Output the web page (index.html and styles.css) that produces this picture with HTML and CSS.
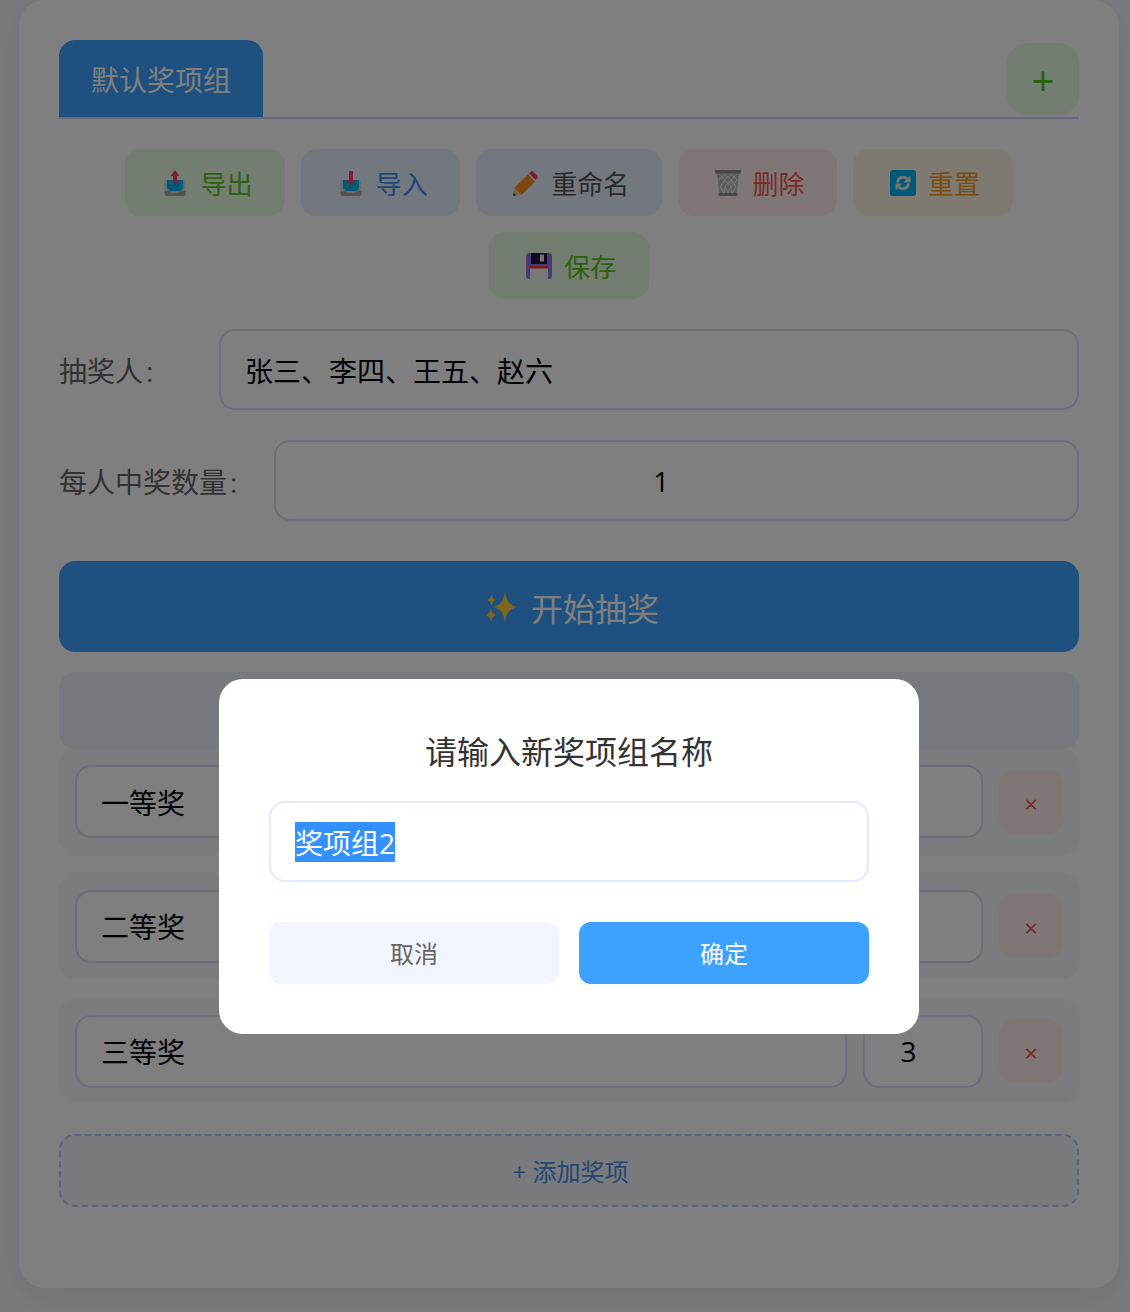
FILE: index.html
```html
<!DOCTYPE html>
<html lang="zh-CN">
<head>
<meta charset="utf-8">
<title>抽奖</title>
<link rel="stylesheet" href="styles.css">
</head>
<body>
<main class="card">
  <div class="tabs">
    <div class="tab">默认奖项组</div>
    <button class="tab-add">+</button>
  </div>
  <div class="actions">
    <button class="act act-green"><svg class="ico" viewBox="0 0 26 26"><path d="M2.500 12a2 2 0 0 1 2-2h17a2 2 0 0 1 2 2v12a2 2 0 0 1-2 2h-17a2 2 0 0 1-2-2z" fill="#d4d4d4"/><path d="M2.500 21h5l2 2h7l2-2h5v3a2 2 0 0 1-2 2h-17a2 2 0 0 1-2-2z" fill="#a8a8a8"/><path d="M5 10h16v8l-3 3h-10l-3-3z" fill="#00b4f4"/><path d="M13 0l4.500 6h-2.500v8h-4v-8h-2.500z" fill="#ff3b6b"/></svg><span>导出</span></button>
    <button class="act act-blue"><svg class="ico" viewBox="0 0 26 26"><path d="M2.500 12a2 2 0 0 1 2-2h17a2 2 0 0 1 2 2v12a2 2 0 0 1-2 2h-17a2 2 0 0 1-2-2z" fill="#d4d4d4"/><path d="M2.500 21h5l2 2h7l2-2h5v3a2 2 0 0 1-2 2h-17a2 2 0 0 1-2-2z" fill="#a8a8a8"/><path d="M5 10h16v8l-3 3h-10l-3-3z" fill="#00b4f4"/><path d="M13 16l-4.500-6h2.500v-9h4v9h2.500z" fill="#ff3b6b"/></svg><span>导入</span></button>
    <button class="act act-gray"><svg class="ico" viewBox="0 0 26 26"><path d="M1.500 18L15 4.500l7 7L8.500 25z" fill="#ff8a1f"/><path d="M0 26l1.500-8 7 7z" fill="#f3c48a"/><path d="M0 26l.7-3 2.300 2.300z" fill="#333"/><path d="M16 3.500l2-2a1.500 1.500 0 0 1 2.100 0l4.400 4.400a1.500 1.500 0 0 1 0 2.100l-2 2z" fill="#ff3b6b"/></svg><span>重命名</span></button>
    <button class="act act-red"><svg class="ico" viewBox="0 0 26 26"><path d="M2 2.500h22l-2 21h-18z" fill="#bdbdbd"/><path d="M4 4l6 6-5 7 4 6M10 4l-6 6M10 4l6 6-6 7 3 6M16 4l-6 6M16 4l6 6-6 7-3 6M22 4l-6 6 5 7-4 6M5 17l5-7M10 17l6-7M16 17l-6-7M21 17l-5-7M5 17l4 6M10 17l-1 6M16 17l1 6M21 17l-4 6" fill="none" stroke="#f0f0f0" stroke-width=".9"/><rect x="0" y="0" width="26" height="3.400" rx="1" fill="#909090"/><rect x="3.500" y="23" width="19" height="3" rx="1.200" fill="#909090"/></svg><span>删除</span></button>
    <button class="act act-orange"><svg class="ico" viewBox="0 0 26 26"><rect width="26" height="26" rx="3" fill="#00b0f0"/><path d="M7.500 12.500a5.500 5.500 0 0 1 9.500-3.500" fill="none" stroke="#ececec" stroke-width="2.800"/><path d="M20.500 5.500v7h-7z" fill="#ececec"/><path d="M18.500 13.500a5.500 5.500 0 0 1-9.500 3.500" fill="none" stroke="#ececec" stroke-width="2.800"/><path d="M5.500 20.500v-7h7z" fill="#ececec"/></svg><span>重置</span></button>
    <button class="act act-green"><svg class="ico" viewBox="0 0 26 26"><path d="M3 0h20a3 3 0 0 1 3 3v20a3 3 0 0 1-3 3h-20a3 3 0 0 1-3-3v-20a3 3 0 0 1 3-3z" fill="#8a78e0"/><rect x="5" y="0" width="16" height="11" fill="#1e1438"/><rect x="14" y="1.500" width="4" height="7" fill="#e8e8e8"/><rect x="4" y="13" width="18" height="13" fill="#f0f0f0"/><rect x="4" y="13" width="18" height="2.500" fill="#ff3b3b"/></svg><span>保存</span></button>
  </div>
  <div class="field">
    <label class="field-label" for="people">抽奖人<span class="colon">:</span></label>
    <input class="text-input" id="people" type="text" value="张三、李四、王五、赵六">
  </div>
  <div class="field">
    <label class="field-label" for="perperson">每人中奖数量<span class="colon">:</span></label>
    <input class="text-input num-input" id="perperson" type="number" value="1">
  </div>
  <button class="start"><svg class="sparkle" viewBox="0 0 32 32"><path d="M20 0c1.200 10 4 13.500 12 16-8 2.500-10.800 6-12 16-1.200-10-4-13.500-11.500-16 7.500-2.500 10.300-6 11.500-16z" fill="#ffc83d"/><path d="M6.500 3c.6 3.400 1.600 4.800 4 6-2.400 1.200-3.400 2.600-4 6-.6-3.400-1.600-4.800-4-6 2.400-1.200 3.400-2.600 4-6z" fill="#ffc83d"/><path d="M6 17c.8 3.900 2 5.500 5 7-3 1.500-4.200 3.100-5 7-.8-3.900-2-5.500-5-7 3-1.500 4.200-3.100 5-7z" fill="#ffc83d"/></svg><span>开始抽奖</span></button>
  <div class="prize-head"></div>
  <div class="prizes">
    <div class="prize"><input class="text-input prize-name" type="text" value="一等奖"><input class="text-input num-input prize-count" type="number" value="1"><button class="prize-del">×</button></div>
    <div class="prize"><input class="text-input prize-name" type="text" value="二等奖"><input class="text-input num-input prize-count" type="number" value="2"><button class="prize-del">×</button></div>
    <div class="prize"><input class="text-input prize-name" type="text" value="三等奖"><input class="text-input num-input prize-count" type="number" value="3"><button class="prize-del">×</button></div>
  </div>
  <button class="add-prize">+ 添加奖项</button>
</main>
<div class="overlay">
  <div class="modal">
    <h2 class="modal-title">请输入新奖项组名称</h2>
    <input class="modal-input" id="groupName" type="text" value="奖项组2">
    <div class="modal-btns">
      <button class="mbtn mbtn-cancel">取消</button>
      <button class="mbtn mbtn-ok">确定</button>
    </div>
  </div>
</div>
<script src="script.js"></script>
</body>
</html>
```
FILE: styles.css
```css
* { box-sizing: border-box; }
html, body { margin: 0; }
body {
  background: #f3f5fb;
  font-family: "Open Sans", "Noto Sans CJK SC", sans-serif;
  padding: 0 11px 24px 19px;
  color: #333;
}
button, input { font-family: inherit; }
button { cursor: pointer; }
::selection { background: #3390ff; color: #fff; }
.card {
  width: 1100px;
  height: 1288px;
  padding: 40px;
  background: #fff;
  border-radius: 26px;
  box-shadow: 0 8px 32px rgba(20, 30, 60, .08);
}
.tabs {
  display: flex;
  justify-content: space-between;
  align-items: flex-end;
  height: 79px;
  border-bottom: 2px solid #ccd0f6;
}
.tab {
  height: 77px;
  padding: 0 32px;
  background: #3da2ff;
  color: #fff;
  font-size: 28px;
  line-height: 80px;
  border-radius: 16px 16px 0 0;
}
.tab-add {
  width: 72px;
  height: 72px;
  margin-bottom: 2px;
  padding: 2px 0 0;
  border: 0;
  border-radius: 20px;
  background: #e8fbe2;
  color: #52c41a;
  font-size: 40px;
  line-height: 72px;
}
.actions {
  display: flex;
  flex-wrap: wrap;
  justify-content: center;
  gap: 16.4px 16px;
  margin-top: 30.300px;
}
.act {
  display: flex;
  align-items: center;
  gap: 11.900px;
  height: 66.670px;
  padding: 0 32.500px 0 37px;
  border: 0;
  border-radius: 16px;
  font-size: 26px;
}
.act-green { background: #e8fbe2; color: #5cc51f; }
.act-blue { background: #e6f0ff; color: #3f8ff0; }
.act-gray { background: #e6f0ff; color: #555; }
.act-red { background: #ffecec; color: #f25555; }
.act-orange { background: #fff5e2; color: #f59a23; }
.ico { width: 26px; height: 26px; flex: none; overflow: visible; }
.field {
  display: flex;
  align-items: center;
  margin-top: 30.300px;
}
.field + .field { margin-top: 30px; }
.field-label {
  min-width: 123px;
  margin-right: 37px;
  font-size: 28px;
  color: #666;
  white-space: nowrap;
}
.colon { margin-left: 3px; }
.text-input {
  flex: 1;
  min-width: 0;
  height: 81px;
  padding: 0 24px;
  border: 2px solid #dadcf9;
  border-radius: 16px;
  background: #fff;
  color: #000;
  font-size: 28px;
  outline: none;
}
.num-input { text-align: center; padding-right: 40px; }
.num-input::-webkit-inner-spin-button { width: 30px; opacity: 0; }
.start {
  display: flex;
  justify-content: center;
  align-items: center;
  gap: 14px;
  width: 100%;
  height: 91px;
  margin-top: 40px;
  padding: 0;
  border: 0;
  border-radius: 16px;
  background: #3da2ff;
  color: #fff;
  font-size: 32px;
}
.sparkle { width: 32px; height: 32px; flex: none; margin-left: 6px; }
.prize-head {
  height: 77px;
  margin-top: 20px;
  border-radius: 16px;
  background: #ecf2fa;
}
.prizes {
  display: flex;
  flex-direction: column;
  gap: 20.300px;
}
.prize {
  display: flex;
  align-items: center;
  gap: 16px;
  height: 104.500px;
  padding: 0 16px;
  border-radius: 16px;
  background: #f4f8fc;
}
.prize-name { height: 73px; }
.prize-count { flex: none; width: 120px; height: 73px; padding-right: 38px; }
.prize-del {
  flex: none;
  width: 64px;
  height: 64px;
  padding: 3px 0 0;
  border: 0;
  border-radius: 16px;
  background: #ffecec;
  color: #f25555;
  font-size: 24px;
}
.add-prize {
  display: block;
  width: 100%;
  height: 73.600px;
  margin-top: 30.500px;
  padding: 0 0 0 3px;
  border: 2px dashed #b4cdf0;
  border-radius: 16px;
  background: #f1f5fa;
  color: #4a8ee8;
  font-size: 24px;
}
.overlay {
  position: fixed;
  inset: 0;
  padding: 679px 0 0 219px;
  background: rgba(0, 0, 0, .5);
}
.modal {
  width: 700px;
  height: 355px;
  padding: 50px;
  border-radius: 24px;
  background: #fff;
}
.modal-title {
  margin: 0;
  height: 46px;
  font-size: 32px;
  font-weight: 400;
  line-height: 46px;
  text-align: center;
  color: #333;
}
.modal-input {
  display: block;
  width: 100%;
  height: 81px;
  margin-top: 26px;
  padding: 0 24px;
  border: 2px solid #e2e8ff;
  border-radius: 16px;
  color: #333;
  font-size: 28px;
  outline: none;
}
.modal-btns {
  display: flex;
  gap: 20px;
  margin-top: 40px;
}
.mbtn {
  flex: 1;
  height: 62px;
  padding: 0 0 2px;
  border: 0;
  border-radius: 12px;
  font-size: 24px;
}
.mbtn-cancel { background: #f1f5ff; color: #666; }
.mbtn-ok { background: #3da2ff; color: #fff; }
```
FILE: script.js
```js
var field = document.getElementById('groupName');
field.focus();
field.select();
```
